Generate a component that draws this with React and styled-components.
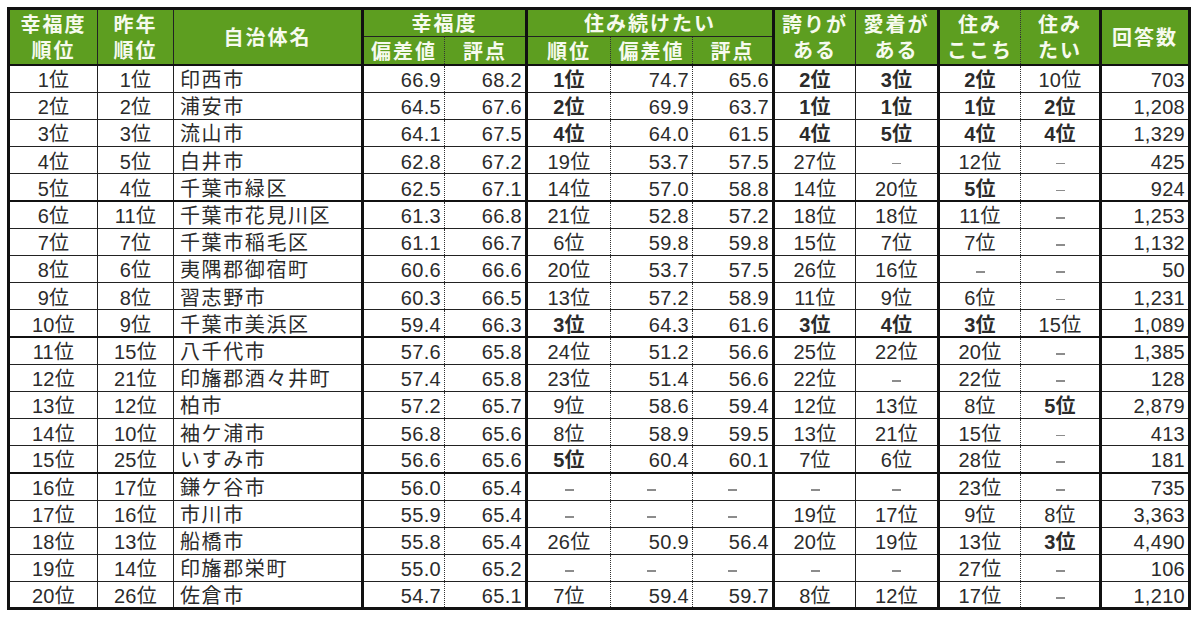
import React from "react";
import styled, { createGlobalStyle } from "styled-components";

const GlobalStyle = createGlobalStyle`
  html, body {
    margin: 0;
    padding: 0;
    background: #ffffff;
  }
  body {
    font-family: "Liberation Sans", "Noto Sans CJK JP", sans-serif;
    color: #2b2b2b;
  }
`;

const BORDERS = {
  thin: "1px solid #222",
  dot: "1px dotted #333",
  thick: "3px solid #111",
};

// column layout: width, text alignment, right edge style
const cols = [
  { w: 89, align: "center", right: "thin" },
  { w: 76, align: "center", right: "thin" },
  { w: 189, align: "left", right: "thick" },
  { w: 82, align: "right", right: "dot" },
  { w: 82, align: "right", right: "thick" },
  { w: 84, align: "center", right: "dot" },
  { w: 82, align: "right", right: "dot" },
  { w: 81, align: "right", right: "thick" },
  { w: 82, align: "center", right: "thin" },
  { w: 83, align: "center", right: "thick" },
  { w: 82, align: "center", right: "dot" },
  { w: 80, align: "center", right: "thick" },
  { w: 89, align: "right", right: "thick" },
];

// "*" marks a bold cell, "-" an empty one
const rows = [
  ["1位", "1位", "印西市", "66.9", "68.2", "*1位", "74.7", "65.6", "*2位", "*3位", "*2位", "10位", "703"],
  ["2位", "2位", "浦安市", "64.5", "67.6", "*2位", "69.9", "63.7", "*1位", "*1位", "*1位", "*2位", "1,208"],
  ["3位", "3位", "流山市", "64.1", "67.5", "*4位", "64.0", "61.5", "*4位", "*5位", "*4位", "*4位", "1,329"],
  ["4位", "5位", "白井市", "62.8", "67.2", "19位", "53.7", "57.5", "27位", "-", "12位", "-", "425"],
  ["5位", "4位", "千葉市緑区", "62.5", "67.1", "14位", "57.0", "58.8", "14位", "20位", "*5位", "-", "924"],
  ["6位", "11位", "千葉市花見川区", "61.3", "66.8", "21位", "52.8", "57.2", "18位", "18位", "11位", "-", "1,253"],
  ["7位", "7位", "千葉市稲毛区", "61.1", "66.7", "6位", "59.8", "59.8", "15位", "7位", "7位", "-", "1,132"],
  ["8位", "6位", "夷隅郡御宿町", "60.6", "66.6", "20位", "53.7", "57.5", "26位", "16位", "-", "-", "50"],
  ["9位", "8位", "習志野市", "60.3", "66.5", "13位", "57.2", "58.9", "11位", "9位", "6位", "-", "1,231"],
  ["10位", "9位", "千葉市美浜区", "59.4", "66.3", "*3位", "64.3", "61.6", "*3位", "*4位", "*3位", "15位", "1,089"],
  ["11位", "15位", "八千代市", "57.6", "65.8", "24位", "51.2", "56.6", "25位", "22位", "20位", "-", "1,385"],
  ["12位", "21位", "印旛郡酒々井町", "57.4", "65.8", "23位", "51.4", "56.6", "22位", "-", "22位", "-", "128"],
  ["13位", "12位", "柏市", "57.2", "65.7", "9位", "58.6", "59.4", "12位", "13位", "8位", "*5位", "2,879"],
  ["14位", "10位", "袖ケ浦市", "56.8", "65.6", "8位", "58.9", "59.5", "13位", "21位", "15位", "-", "413"],
  ["15位", "25位", "いすみ市", "56.6", "65.6", "*5位", "60.4", "60.1", "7位", "6位", "28位", "-", "181"],
  ["16位", "17位", "鎌ケ谷市", "56.0", "65.4", "-", "-", "-", "-", "-", "23位", "-", "735"],
  ["17位", "16位", "市川市", "55.9", "65.4", "-", "-", "-", "19位", "17位", "9位", "8位", "3,363"],
  ["18位", "13位", "船橋市", "55.8", "65.4", "26位", "50.9", "56.4", "20位", "19位", "13位", "*3位", "4,490"],
  ["19位", "14位", "印旛郡栄町", "55.0", "65.2", "-", "-", "-", "-", "-", "27位", "-", "106"],
  ["20位", "26位", "佐倉市", "54.7", "65.1", "7位", "59.4", "59.7", "8位", "12位", "17位", "-", "1,210"],
];

const Page = styled.div`
  padding: 7px 0 0 7px;
`;

const Table = styled.table`
  border-collapse: collapse;
  table-layout: fixed;
  width: 1181px;
  border: 3px solid #111;
`;

const HeadCell = styled.th`
  background: #5d9e20;
  color: #f6faee;
  font-family: "Noto Sans CJK JP", sans-serif;
  font-weight: 700;
  font-size: 20px;
  letter-spacing: 2px;
  line-height: 26px;
  height: ${(p) => p.$h}px;
  padding: 0;
  text-align: center;
  vertical-align: middle;
  border-right: ${(p) => BORDERS[p.$right]};
  border-bottom: ${(p) => (p.$group ? "1px solid #222" : "2px solid #111")};
  white-space: pre-line;
`;

const Row = styled.tr`
  height: 27.2px;
`;

const Cell = styled.td`
  font-size: 20px;
  line-height: 1;
  padding: 3px ${(p) => (p.$align === "right" ? "3px" : "0")} 0
    ${(p) => (p.$align === "left" ? "6px" : "0")};
  text-align: ${(p) => p.$align};
  vertical-align: middle;
  white-space: nowrap;
  overflow: hidden;
  letter-spacing: ${(p) => (p.$align === "left" ? "1.6px" : "0.3px")};
  font-weight: ${(p) => (p.$bold ? 700 : 400)};
  color: #2b2b2b;
  border-right: ${(p) => BORDERS[p.$right]};
  border-bottom: ${(p) => (p.$heavy ? "2px solid #111" : "1px solid #222")};
`;

const Dash = styled.span`
  display: inline-block;
  width: 9px;
  height: 1.5px;
  background: #8c8c8c;
  vertical-align: middle;
`;

const single = [
  { i: 0, label: "幸福度\n順位" },
  { i: 1, label: "昨年\n順位" },
  { i: 2, label: "自治体名" },
];

const tail = [
  { i: 8, label: "誇りが\nある" },
  { i: 9, label: "愛着が\nある" },
  { i: 10, label: "住み\nここち" },
  { i: 11, label: "住み\nたい" },
  { i: 12, label: "回答数" },
];

const subHeads = [
  { i: 3, label: "偏差値" },
  { i: 4, label: "評点" },
  { i: 5, label: "順位" },
  { i: 6, label: "偏差値" },
  { i: 7, label: "評点" },
];

const renderValue = (raw) => {
  const bold = raw.startsWith("*");
  const text = bold ? raw.slice(1) : raw;
  return { bold, empty: text === "-", text };
};

const App = () => (
  <>
    <GlobalStyle />
    <Page>
      <Table>
        <colgroup>
          {cols.map((c, i) => (
            <col key={i} style={{ width: c.w }} />
          ))}
        </colgroup>
        <thead>
          <tr>
            {single.map((h) => (
              <HeadCell key={h.i} rowSpan={2} $right={cols[h.i].right} $h={25}>
                {h.label}
              </HeadCell>
            ))}
            <HeadCell colSpan={2} $group $right="thick" $h={25}>
              幸福度
            </HeadCell>
            <HeadCell colSpan={3} $group $right="thick" $h={25}>
              住み続けたい
            </HeadCell>
            {tail.map((h) => (
              <HeadCell key={h.i} rowSpan={2} $right={cols[h.i].right} $h={25}>
                {h.label}
              </HeadCell>
            ))}
          </tr>
          <tr>
            {subHeads.map((h) => (
              <HeadCell key={h.i} $right={cols[h.i].right} $h={27}>
                {h.label}
              </HeadCell>
            ))}
          </tr>
        </thead>
        <tbody>
          {rows.map((r, ri) => (
            <Row key={ri}>
              {r.map((raw, ci) => {
                const v = renderValue(raw);
                return (
                  <Cell
                    key={ci}
                    $align={v.empty ? "center" : cols[ci].align}
                    $right={cols[ci].right}
                    $bold={v.bold}
                    $heavy={ri === 4 || ri === 9 || ri === 14}
                  >
                    {v.empty ? <Dash aria-label="－" /> : v.text}
                  </Cell>
                );
              })}
            </Row>
          ))}
        </tbody>
      </Table>
    </Page>
  </>
);

export default App;
